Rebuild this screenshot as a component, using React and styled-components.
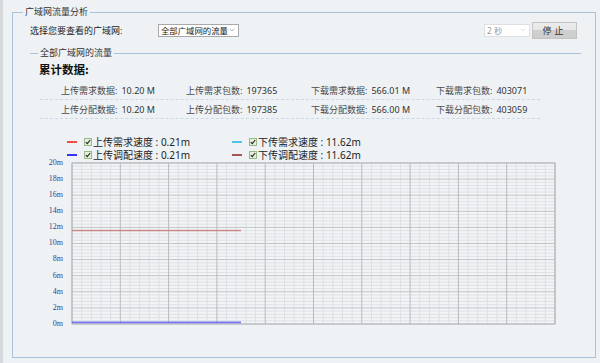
import React from 'react';
import styled, { createGlobalStyle } from 'styled-components';
import { ChevronDown } from 'lucide-react';

const GlobalStyle = createGlobalStyle`
  html, body {
    margin: 0;
    padding: 0;
    background: #eef2f5;
  }
  body {
    font-family: "Noto Sans", "Noto Sans CJK SC", sans-serif;
    color: #333;
  }
`;

const Frame = styled.div`
  box-sizing: border-box;
  width: 600px;
  height: 363px;
  display: flex;
  padding: 5px 4px 5px 9px;
  border-left: 3px solid #d6d9dc;
  overflow: hidden;
`;

const Group = styled.fieldset`
  flex: 1;
  margin: 0;
  padding: 0 14px 0 10px;
  border: 1px solid #a9c1d9;
  min-width: 0;
`;

const GroupTitle = styled.legend`
  padding: 0 2px;
  font-size: 9px;
  line-height: 14px;
  color: #333;
`;

const Content = styled.div`
  padding-left: 7px;
`;

const TopRow = styled.div`
  display: flex;
  align-items: center;
  height: 16px;
  margin: 3px 4px 0 0;
  font-size: 9px;
  color: #222;
`;

const SelectLabel = styled.span`
  width: 128px;
`;

const Select = styled.div`
  box-sizing: border-box;
  display: flex;
  align-items: center;
  justify-content: space-between;
  width: ${p => p.$width}px;
  height: 13px;
  padding: 0 2px 0 2px;
  background: #fff;
  border: 1px solid ${p => (p.$disabled ? '#dde0e3' : '#a8a8a8')};
  color: ${p => (p.$disabled ? '#9a9a9a' : '#222')};
  font-size: 8.4px;
  line-height: 11px;
  white-space: nowrap;
  overflow: hidden;
  svg {
    flex: none;
    color: ${p => (p.$disabled ? '#b8b8b8' : '#666')};
  }
`;

const Spacer = styled.div`
  flex: 1;
`;

const StopButton = styled.button`
  box-sizing: border-box;
  width: 45px;
  height: 17px;
  margin-left: 2px;
  padding: 0;
  border: 1px solid #c3c3c3;
  background: linear-gradient(#ececec 0%, #e6e6e6 45%, #cfcfcf 50%, #cdcdcd 100%);
  font-family: "Noto Sans CJK SC", sans-serif;
  font-size: 9px;
  color: #333;
  letter-spacing: 3px;
`;

const SubGroup = styled.fieldset`
  margin: 8px 0 0 0;
  padding: 0 0 0 8px;
  border: none;
  border-top: 1px solid #a9c1d9;
  min-width: 0;
`;

const Title = styled.div`
  margin: 1px 0 0 1px;
  font-family: "Noto Sans CJK SC", sans-serif;
  font-size: 11.5px;
  font-weight: 700;
  line-height: 16px;
  color: #111;
`;

const Stats = styled.div`
  width: 500px;
  margin: 4px 0 0 2px;
`;

const StatRow = styled.div`
  display: grid;
  grid-template-columns: repeat(4, 125px);
  align-items: center;
  height: 18px;
  padding-left: 21px;
  border-bottom: 1px dashed #cbd8e6;
  font-size: 9px;
`;

const Stat = styled.div`
  display: flex;
  gap: 4px;
  white-space: nowrap;
`;

const StatLabel = styled.span`
  color: #4a4a4a;
`;

const StatValue = styled.span`
  color: #333;
`;

const Legend = styled.div`
  display: grid;
  grid-template-columns: 165px auto;
  margin: 16px 0 0 29px;
  font-size: 10px;
  color: #222;
`;

const LegendItem = styled.div`
  display: flex;
  align-items: center;
  height: 13px;
  white-space: nowrap;
`;

const Swatch = styled.span`
  width: 10px;
  height: 2px;
  margin-right: 7px;
  background: ${p => p.$color};
`;

const Check = styled.span`
  box-sizing: border-box;
  display: inline-flex;
  align-items: center;
  justify-content: center;
  width: 8px;
  height: 8px;
  margin-right: 1px;
  border: 1px solid #9bb88a;
  background: #e4f1da;
`;

const ChartBox = styled.svg`
  display: block;
  overflow: visible;
  margin: 1px 0 0 -8px;
`;

const stats = [
  [
    ['上传需求数据:', '10.20 M'],
    ['上传需求包数:', '197365'],
    ['下载需求数据:', '566.01 M'],
    ['下载需求包数:', '403071'],
  ],
  [
    ['上传分配数据:', '10.20 M'],
    ['上传分配包数:', '197385'],
    ['下载分配数据:', '566.00 M'],
    ['下载分配包数:', '403059'],
  ],
];

const series = [
  { color: '#ff4a4a', label: '上传需求速度', value: '0.21m' },
  { color: '#4ec4e8', label: '下传需求速度', value: '11.62m' },
  { color: '#3434ff', label: '上传调配速度', value: '0.21m' },
  { color: '#a55656', label: '下传调配速度', value: '11.62m' },
];

// plot geometry inside the svg
const PX = 42;
const PY = 1;
const PW = 483;
const PH = 161;

function Chart() {
  const minorV = [];
  const majorV = [];
  for (let i = 0; i <= 50; i++) {
    const x = PX + (PW * i) / 50;
    (i % 5 === 0 ? majorV : minorV).push(x);
  }
  const minorH = [];
  const majorH = [];
  for (let j = 0; j <= 50; j++) {
    const y = PY + (PH * j) / 50;
    (j % 5 === 0 ? majorH : minorH).push(y);
  }
  const yFor = v => PY + PH - (v / 20) * PH;
  const endX = PX + 169;

  return (
    <ChartBox width="530" height="172" viewBox="0 0 530 172">
      <rect x={PX} y={PY} width={PW} height={PH} fill="#f2f4f6" />
      {minorH.map(y => (
        <line key={'mh' + y} x1={PX} x2={PX + PW} y1={y} y2={y} stroke="#dde1e5" strokeWidth="1" />
      ))}
      {minorV.map(x => (
        <line key={'mv' + x} x1={x} x2={x} y1={PY} y2={PY + PH} stroke="#dde1e5" strokeWidth="1" />
      ))}
      {majorH.map(y => (
        <line key={'MH' + y} x1={PX} x2={PX + PW} y1={y} y2={y} stroke="#c2c5c8" strokeWidth="1" />
      ))}
      {majorV.map(x => (
        <line key={'MV' + x} x1={x} x2={x} y1={PY} y2={PY + PH} stroke="#b8bbbe" strokeWidth="1" />
      ))}
      <rect x={PX} y={PY} width={PW} height={PH} fill="none" stroke="#b4b7ba" strokeWidth="1" />
      {majorH.map((y, j) => (
        <text
          key={'t' + j}
          x={PX - 9}
          y={y}
          textAnchor="end"
          dominantBaseline="middle"
          fontFamily='"Liberation Serif", serif'
          fontSize="8"
          fill="#3b3b8c"
        >
          {(20 - j * 2) + 'm'}
        </text>
      ))}
      <line x1={PX} x2={endX} y1={yFor(11.62)} y2={yFor(11.62)} stroke="#c98a8a" strokeWidth="1.6" />
      <line x1={PX} x2={endX} y1={yFor(0.21)} y2={yFor(0.21)} stroke="#7474f2" strokeWidth="1.8" />
    </ChartBox>
  );
}

export default function App() {
  return (
    <>
      <GlobalStyle />
      <Frame>
        <Group>
          <GroupTitle>广域网流量分析</GroupTitle>
          <Content>
            <TopRow>
              <SelectLabel>选择您要查看的广域网:</SelectLabel>
              <Select $width={81}>
                全部广域网的流量
                <ChevronDown size={8} strokeWidth={1.5} />
              </Select>
              <Spacer />
              <Select $width={46} $disabled>
                2 秒
                <ChevronDown size={8} strokeWidth={1.5} />
              </Select>
              <StopButton>停止</StopButton>
            </TopRow>
            <SubGroup>
              <GroupTitle>全部广域网的流量</GroupTitle>
              <Title>累计数据:</Title>
              <Stats>
                {stats.map((row, r) => (
                  <StatRow key={r}>
                    {row.map(([label, value]) => (
                      <Stat key={label}>
                        <StatLabel>{label}</StatLabel>
                        <StatValue>{value}</StatValue>
                      </Stat>
                    ))}
                  </StatRow>
                ))}
              </Stats>
              <Legend>
                {series.map(s => (
                  <LegendItem key={s.label}>
                    <Swatch $color={s.color} />
                    <Check>
                      <svg width="6" height="6" viewBox="0 0 6 6">
                        <path d="M0.8 3.1 L2.3 4.6 L5.2 1" fill="none" stroke="#222" strokeWidth="1.1" />
                      </svg>
                    </Check>
                    {s.label} : {s.value}
                  </LegendItem>
                ))}
              </Legend>
              <Chart />
            </SubGroup>
          </Content>
        </Group>
      </Frame>
    </>
  );
}
